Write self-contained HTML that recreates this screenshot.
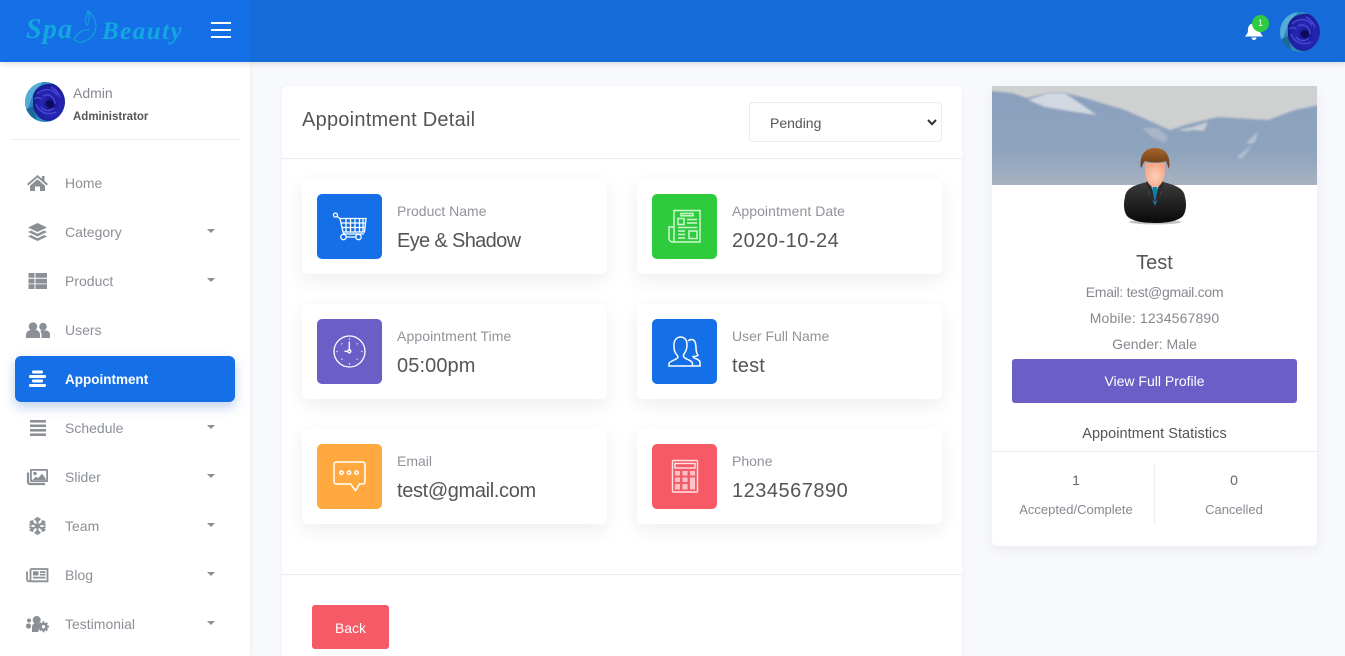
<!DOCTYPE html>
<html><head><meta charset="utf-8"><title>Appointment Detail</title>
<style>
*{box-sizing:border-box}
html,body{margin:0;padding:0;width:1345px;height:656px;overflow:hidden;background:#f8f9fd;font-family:"Liberation Sans",sans-serif;color:#555}
#wrap{position:relative;width:1345px;height:656px;overflow:hidden}
.a{position:absolute}
.t{position:absolute;white-space:nowrap;line-height:1}
#top{left:0;top:0;width:1345px;height:62px;background:#146bd9;box-shadow:0 2px 5px rgba(0,0,0,.13);z-index:5}
#logo{left:0;top:0;width:250px;height:62px;background:#1570e8}
#side{left:0;top:62px;width:250px;height:594px;background:#fff;box-shadow:0 0 6px rgba(60,80,120,.07)}
.m{position:absolute;left:65px;font-size:14px;color:#8b9097;line-height:1;white-space:nowrap;z-index:2}
.ic{position:absolute;left:25px;width:26px;height:22px;z-index:2}
.car{position:absolute;left:207px;width:0;height:0;border-left:4.5px solid transparent;border-right:4.5px solid transparent;border-top:4.5px solid #8b9097}
.card{position:absolute;width:305px;height:95px;background:#fff;border-radius:6px;box-shadow:0 6px 18px rgba(60,70,100,.09)}
.sq{position:absolute;left:15px;top:15px;width:65px;height:65px;border-radius:5px}
.sq svg{position:absolute;left:0;top:0}
.lb{position:absolute;left:95px;top:25px;font-size:14px;color:#909399;line-height:1;white-space:nowrap}
.v{position:absolute;left:95px;top:52px;font-size:20px;color:#555;line-height:1;white-space:nowrap}
</style></head><body><div id="wrap">

<svg width="0" height="0" style="position:absolute"><defs>
<radialGradient id="r1" cx="55%" cy="55%" r="60%"><stop offset="0" stop-color="#14148a"/><stop offset=".5" stop-color="#2626b4"/><stop offset="1" stop-color="#1a1a8e"/></radialGradient>
<clipPath id="c1"><circle cx="20" cy="20" r="20"/></clipPath>
<g id="rose"><g clip-path="url(#c1)"><rect width="40" height="40" fill="#2a88bc"/><path d="M0 0h18L8 12 4 24 0 30z" fill="#55acd8"/><path d="M0 28l8-4 4 16H0z" fill="#1c6a9c"/><path d="M8 14C10 4 20 1 30 2c8 3 11 10 10 20-2 10-8 16-16 17-8 0-14-6-16-14z" fill="url(#r1)"/><path d="M12 12c6-6 16-6 20 1M11 22c3 8 11 12 20 8M18 14c6-3 12 1 12 8M16 25c3 4 9 5 13 1M9 17c3-2 5-2 7 0M26 5c4 2 7 5 9 10" stroke="#4a4ad8" stroke-width="1.300" fill="none"/><path d="M21 20c2-3 7-2 8 1s-2 6-5 5-4-4-3-6z" fill="#0c0c58"/></g></g>
</defs></svg>

<div class="a" id="top">
  <div class="a" id="logo">
    <div class="t" style="left:26px;top:14px;font:italic bold 28px 'Liberation Serif',serif;color:#14a6de;letter-spacing:1.3px">Spa</div>
    <svg class="a" style="left:72px;top:8px" width="30" height="38" viewBox="0 0 30 38" fill="none" stroke="#12a0d6" stroke-width="1.200"><path d="M16 3C14 9 12 13 15 17C18 13 18 8 16 3ZM16 3C26 10 29 28 10 34C7 34.500 3 33 2 31C6 24 12 21 18 22"/></svg>
    <div class="t" style="left:102px;top:18px;font:italic bold 25px 'Liberation Serif',serif;color:#14a6de;letter-spacing:1.500px">Beauty</div>
    <div class="a" style="left:211px;top:22px;width:20px;height:2px;background:#fff"></div>
    <div class="a" style="left:211px;top:29px;width:20px;height:2px;background:#fff"></div>
    <div class="a" style="left:211px;top:36px;width:20px;height:2px;background:#fff"></div>
  </div>
  <svg class="a" style="left:1244px;top:22px" width="20" height="20" viewBox="0 0 20 20"><path fill="#fff" d="M10 0c1 0 1.500.7 1.500 1.500C14.500 2.200 16 4.500 16 7.500c0 3.500 1 4.500 3 7H1c2-2.500 3-3.500 3-7C4 4.500 5.500 2.200 8.500 1.500 8.500.7 9 0 10 0zM7.600 15.500h4.800c0 1.400-1 2.500-2.400 2.500s-2.400-1.100-2.400-2.500z"/></svg>
  <div class="a" style="left:1252px;top:15px;width:17px;height:17px;border-radius:50%;background:#2ecc40;color:#fff;font-size:9px;line-height:17px;text-align:center">1</div>
  <svg class="a" style="left:1280px;top:12px" width="40" height="40" viewBox="0 0 40 40"><use href="#rose"/></svg>
</div>

<div class="a" id="side"></div>
<svg class="a" style="left:25px;top:82px" width="40" height="40" viewBox="0 0 40 40"><use href="#rose"/></svg>
<div class="t" style="left:73px;top:86px;font-size:14px;color:#85898f">Admin</div>
<div class="t" style="left:73px;top:112px;font-size:11.500px;font-weight:bold;color:#555">Administrator</div>
<div class="a" style="left:10px;top:139px;width:230px;height:1px;background:#eceef1"></div>

<svg class="ic" style="top:172px" viewBox="0 0 26 22" fill="#8b9097"><path d="M12.500 3L2 12l1.200 1.500L12.500 5.500l9.300 8L23 12l-3.500-3V4H17v2.800z"/><path d="M5 13.700V19h5v-4.500h5V19h5v-5.300L12.500 7.200z"/></svg>
<div class="m" style="top:176px">Home</div>

<svg class="ic" style="top:221px" viewBox="0 0 26 22" fill="#8b9097"><path d="M12.500 2L22 6.500 12.500 11 3 6.500z"/><path d="M3 11l3-1.500 6.500 3.200L19 9.500l3 1.500-9.500 4.500z"/><path d="M3 15.500L6 14l6.500 3.200L19 14l3 1.500-9.500 4.500z"/></svg>
<div class="m" style="top:225px">Category</div>
<div class="car" style="top:229px"></div>

<svg class="ic" style="top:270px" viewBox="0 0 26 22" fill="#8b9097"><path d="M3.500 3h6v4.800h-6zM10.500 3H22v4.800H10.500zM3.500 8.700h6v4.800h-6zM10.500 8.700H22v4.800H10.500zM3.500 14.300h6V19h-6zM10.500 14.300H22V19H10.500z"/></svg>
<div class="m" style="top:274px">Product</div>
<div class="car" style="top:278px"></div>

<svg class="ic" style="top:319px" viewBox="0 0 26 22" fill="#8b9097"><circle cx="8" cy="7.500" r="4.300"/><circle cx="18" cy="7.700" r="3.800"/><path d="M1 19v-3c0-3 2.500-5 5-5h4.500c2.500 0 4.500 2 4.500 5v3z"/><path d="M16.500 19v-3c0-1.500-.4-3-1.300-4 .6-.5 1.300-.6 2-.6h3c2.500 0 4.800 1.600 4.800 4.100V19z"/></svg>
<div class="m" style="top:323px">Users</div>

<div class="a" style="left:15px;top:356px;width:220px;height:46px;background:#1570e8;border-radius:6px;box-shadow:0 5px 12px rgba(21,90,190,.28)"></div>
<svg class="ic" style="top:368px" viewBox="0 0 26 22" fill="#fff"><rect x="7" y="2.500" width="11" height="3" rx="1.200"/><rect x="4" y="7" width="17" height="3" rx="1.200"/><rect x="7" y="11.500" width="11" height="3" rx="1.200"/><rect x="4" y="16" width="17" height="3" rx="1.200"/></svg>
<div class="m" style="top:373px;color:#fff;font-weight:bold;font-size:13.500px">Appointment</div>

<svg class="ic" style="top:417px" viewBox="0 0 26 22" fill="#8b9097"><rect x="5" y="3" width="16" height="2.600"/><rect x="5" y="7.500" width="16" height="2.600"/><rect x="5" y="12" width="16" height="2.600"/><rect x="5" y="16.400" width="16" height="2.600"/></svg>
<div class="m" style="top:421px">Schedule</div>
<div class="car" style="top:425px"></div>

<svg class="ic" style="top:466px" viewBox="0 0 26 22"><path fill="#8b9097" d="M6 3h16c.6 0 1 .4 1 1v11c0 .6-.4 1-1 1H6c-.6 0-1-.4-1-1V4c0-.6.4-1 1-1z"/><path fill="#fff" d="M6.800 4.800h14.400v9.400H6.800z"/><circle cx="10" cy="7.500" r="1.700" fill="#8b9097"/><path fill="#8b9097" d="M7.500 14l3.500-3.500 2 1.800 4-4.500 3.500 4.500v1.700z"/><path fill="none" stroke="#8b9097" stroke-width="2.200" d="M3 6.500V16c0 1 .6 2 2 2h15"/></svg>
<div class="m" style="top:470px">Slider</div>
<div class="car" style="top:474px"></div>

<svg class="ic" style="top:515px" viewBox="0 0 26 22" fill="none" stroke="#8b9097" stroke-width="2"><path d="M12.500 2v18M4.700 6.500l15.600 9M20.300 6.500l-15.600 9M9.800 3.500l2.700 2.700 2.700-2.700M9.800 18.500l2.700-2.700 2.700 2.700M4.500 10l3.500-1.200-.9-3.600M20.500 10L17 8.800l.9-3.600M4.500 12l3.500 1.200-.9 3.600M20.500 12L17 13.200l.9 3.600"/></svg>
<div class="m" style="top:519px">Team</div>
<div class="car" style="top:523px"></div>

<svg class="ic" style="top:564px" viewBox="0 0 26 22"><path fill="none" stroke="#8b9097" stroke-width="1.800" d="M5.500 5H22.500V17.300H4c-1.100 0-2-.8-2-2V7.500M5.500 5V17.300"/><path fill="#8b9097" d="M8 7.300h5.500v4.200H8zM15 7.300h5.500v1.700H15zM15 9.900h5.500v1.600H15zM8 12.800h12.500v1.700H8z"/></svg>
<div class="m" style="top:568px">Blog</div>
<div class="car" style="top:572px"></div>

<svg class="ic" style="top:613px" viewBox="0 0 26 22" fill="#8b9097"><circle cx="11.700" cy="7" r="4"/><circle cx="4" cy="7.500" r="2"/><circle cx="3.500" cy="13" r="2.600"/><path d="M7 19v-5c0-2.500 2-4 5-4 2 0 3 .5 4 1.500L13 19z"/><circle cx="18.500" cy="13.700" r="3" fill="none" stroke="#8b9097" stroke-width="2.600"/><path d="M18.500 8.200v2M18.500 17.200v2M13 13.700h2M22 13.700h2M14.700 9.900l1.400 1.400M20.900 16.100l1.400 1.400M22.300 9.900l-1.400 1.400M16.100 16.100l-1.400 1.400" stroke="#8b9097" stroke-width="1.900"/></svg>
<div class="m" style="top:617px">Testimonial</div>
<div class="car" style="top:621px"></div>

<!-- main panel -->
<div class="a" style="left:282px;top:86px;width:680px;height:570px;background:#fff;border-radius:6px 6px 0 0;box-shadow:0 2px 8px rgba(60,70,100,.04)"></div>
<div class="t" style="left:302px;top:110px;font-size:20px;color:#555;letter-spacing:.24px">Appointment Detail</div>
<div class="a" style="left:749px;top:102px;width:193px;height:40px;background:#fff;border:1px solid #e9ecef;border-radius:4px"></div>
<div class="t" style="left:770px;top:116px;font-size:14px;color:#555">Pending</div>
<svg class="a" style="left:926px;top:118px" width="12" height="9" viewBox="0 0 12 9"><path d="M2 2l4 4.200L10 2" fill="none" stroke="#333" stroke-width="2"/></svg>
<div class="a" style="left:282px;top:158px;width:680px;height:1px;background:#e9ecef"></div>

<div class="card" style="left:302px;top:179px">
  <div class="sq" style="background:#1570e8"><svg width="65" height="65" viewBox="0 0 65 65" fill="none" stroke="#fff" stroke-width="1.300"><circle cx="18.500" cy="21" r="2"/><path d="M20 22.500L23 24.500l3 13.500c.3 1.200 1 2 2.300 2H47"/><path d="M23.500 24.500H49l-1.500 13.500H26.300M24.300 29h24.200M25.200 33.500h22.800M29 24.500V38M33.500 24.500V38M38 24.500V38M42.500 24.500V38M46 24.500V38"/><circle cx="26.500" cy="43" r="2.700"/><circle cx="41.500" cy="43" r="2.700"/><path d="M29.200 43h9.600"/></svg></div>
  <div class="lb">Product Name</div><div class="v" style="letter-spacing:-.65px">Eye &amp; Shadow</div>
</div>
<div class="card" style="left:637px;top:179px">
  <div class="sq" style="background:#2ecc3c"><svg width="65" height="65" viewBox="0 0 65 65" fill="none" stroke="#cff7cf" stroke-width="1.500"><path d="M22 33V16.500h26V48H21c-2.500 0-4-1.500-4-4V33h5v12c0 1.500-.5 3-1.500 3"/><path d="M29 19.500h12v2.300H29zM26 24.500h6v6h-6zM35 25.500h10M35 29h10M26 33.500h19M26 37h7M26 40.500h7M26 44h7M37 37h8v7.500h-8z"/></svg></div>
  <div class="lb" style="letter-spacing:.06px">Appointment Date</div><div class="v" style="letter-spacing:.5px">2020-10-24</div>
</div>
<div class="card" style="left:302px;top:304px">
  <div class="sq" style="background:#6b5fc7"><svg width="65" height="65" viewBox="0 0 65 65" fill="none" stroke="#fff" stroke-width="1.300"><circle cx="32.500" cy="32.500" r="15.500"/><path d="M32.300 22.500v9.500M27.500 32.300h3.500"/><circle cx="32.300" cy="32.300" r="1.500"/><path d="M32.500 19.500v1.200M32.500 44.300v1.200M19.500 32.500h1.200M44.300 32.500h1.200M24.500 24.500l.7.7M39.800 39.800l.7.7M40.500 24.500l-.7.7M25.200 39.800l-.7.7"/></svg></div>
  <div class="lb" style="letter-spacing:.1px">Appointment Time</div><div class="v" style="letter-spacing:.1px">05:00pm</div>
</div>
<div class="card" style="left:637px;top:304px">
  <div class="sq" style="background:#1570e8"><svg width="65" height="65" viewBox="0 0 65 65" fill="none" stroke="#fff" stroke-width="1.500"><path d="M17 47v-2.500c0-2.500 9-4 9-6.500 0-1.500-3-3.500-3.500-6.500-.5-1.500-1-7 0-9 1-3 3.500-4.500 6-4.500 4 0 6.500 3 6.500 7.500 0 2.500-.5 5-1.500 7-1 2-2.500 3-2 5 .5 2.500 9 3.500 9 7V47z"/><path d="M36 22c2-2 5-2 6.500 0 2 2.500 1 7 2 11 .5 2 1.500 3.500 1.500 3.500s-2 1-5 1c0 2 7 2.500 7 6v3.500h-7"/></svg></div>
  <div class="lb">User Full Name</div><div class="v" style="letter-spacing:.2px">test</div>
</div>
<div class="card" style="left:302px;top:429px">
  <div class="sq" style="background:#ffa940"><svg width="65" height="65" viewBox="0 0 65 65" fill="none" stroke="#fff" stroke-width="1.500"><path d="M19.500 18h26c1.500 0 2.500 1 2.500 2.500v17c0 1.500-1 2.500-2.500 2.500h-3l-4 6.500-5-6.500h-14c-1.500 0-2.500-1-2.500-2.500v-17c0-1.500 1-2.500 2.500-2.500z"/><circle cx="24.500" cy="28.700" r="1.700"/><circle cx="32" cy="28.700" r="1.700"/><circle cx="39.500" cy="28.700" r="1.700"/></svg></div>
  <div class="lb">Email</div><div class="v" style="letter-spacing:-.35px">test@gmail.com</div>
</div>
<div class="card" style="left:637px;top:429px">
  <div class="sq" style="background:#f55a66"><svg width="65" height="65" viewBox="0 0 65 65" fill="none" stroke="#fde3e5" stroke-width="1.400"><rect x="20.500" y="16.500" width="25" height="31.500" rx="1"/><rect x="23" y="19.500" width="20" height="4.500"/><path fill="#fbc4c8" stroke="none" d="M23 27h5v4.500h-5zM30.500 27h5v4.500h-5zM38 27h5v4.500h-5zM23 33.500h5v4.500h-5zM30.500 33.500h5v4.500h-5zM38 33.500h5V45.500h-5zM23 40h5v5.500h-5zM30.500 40h5v5.500h-5z"/></svg></div>
  <div class="lb">Phone</div><div class="v" style="letter-spacing:.5px">1234567890</div>
</div>

<div class="a" style="left:282px;top:574px;width:680px;height:1px;background:#e9ecef"></div>
<div class="a" style="left:312px;top:605px;width:77px;height:44px;background:#f55a66;border-radius:3px;color:#fff;font-size:14px;line-height:46px;text-align:center">Back</div>

<!-- profile card -->
<div class="a" style="left:992px;top:86px;width:325px;height:460px;background:#fff;border-radius:6px;box-shadow:0 3px 12px rgba(60,70,100,.08)"></div>
<svg class="a" style="left:992px;top:86px" width="325" height="99" viewBox="0 0 325 99">
  <defs><linearGradient id="mt" x1="0" y1="0" x2="0" y2="1"><stop offset="0" stop-color="#8aa0bd"/><stop offset=".65" stop-color="#8fa4be"/><stop offset="1" stop-color="#a9b3c1"/></linearGradient><filter id="bl"><feGaussianBlur stdDeviation="1"/></filter></defs>
  <rect width="325" height="99" fill="#cfd0d0"/>
  <path filter="url(#bl)" d="M-2 5L20 7 35 12 56 7 73 7 93 12 133 24 160 36 178 44 193 39 226 31 276 34 303 24 327 19V101H-2z" fill="url(#mt)"/>
  <g filter="url(#bl)">
  <path d="M36 14L56 7 73 7 105 29 83 26 53 21z" fill="#d2d8e1"/>
  <path d="M150 42l16 0 10 9-3 6-13-6z" fill="#aab6c8"/>
  <path d="M245 71l15-12-7 10-4 4zM255 56l11-10-3 10-6 2z" fill="#b9c3d1"/>
  <path d="M186 44l14-3 16-5-4 9-10-1-8 1z" fill="#c8ced8"/>
  </g>
</svg>
<svg class="a" style="left:1120px;top:145px" width="70" height="82" viewBox="0 0 70 82">
  <defs><radialGradient id="sk" cx="50%" cy="55%" r="55%"><stop offset="0" stop-color="#fdd2b8"/><stop offset="1" stop-color="#f6a688"/></radialGradient><linearGradient id="su" x1="0" y1="0" x2="0" y2="1"><stop offset="0" stop-color="#3c3c3c"/><stop offset="1" stop-color="#090909"/></linearGradient><linearGradient id="hr" x1="0" y1="0" x2="0" y2="1"><stop offset="0" stop-color="#a8652c"/><stop offset="1" stop-color="#5e3311"/></linearGradient></defs>
  <ellipse cx="35" cy="77" rx="26" ry="2.500" fill="#888" opacity=".5"/>
  <path d="M27 37C15 40 6 43 5 52c-2 8-1 16 3 20 7 5 17 6 27 6s20-1 27-6c4-4 5-12 3-20-1-9-10-12-22-15z" fill="url(#su)"/>
  <path d="M27 36h16l-2 12-6 12-6-12z" fill="#cfe4f0"/>
  <path d="M32.500 42h5l1 10-3.500 9-3.500-9z" fill="#0f7fa8"/>
  <path d="M26 37l4-2 5 22-4-3zM44 37l-4-2-5 22 4-3z" fill="#2c2c2c"/>
  <path d="M25 18c-1 12 2 24 10 24s11-12 10-24z" fill="url(#sk)"/>
  <path d="M21 24C19 11 24 3 35 3s16 8 14 21c-1-3-2-6-3-8-6 2-15 2-21 0-2 2-3 5-4 8z" fill="url(#hr)"/>
</svg>
<div class="t" style="left:992px;width:325px;text-align:center;top:253px;font-size:20px;color:#555">Test</div>
<div class="t" style="left:992px;width:325px;text-align:center;top:285px;font-size:14px;color:#85898f;letter-spacing:-.28px">Email: test@gmail.com</div>
<div class="t" style="left:992px;width:325px;text-align:center;top:311px;font-size:14px;color:#85898f;letter-spacing:.15px">Mobile: 1234567890</div>
<div class="t" style="left:992px;width:325px;text-align:center;top:337px;font-size:14px;color:#85898f">Gender: Male</div>
<div class="a" style="left:1012px;top:359px;width:285px;height:44px;background:#6b5fc7;border-radius:3px;color:#fff;font-size:14px;line-height:44px;text-align:center">View Full Profile</div>
<div class="t" style="left:992px;width:325px;text-align:center;top:427px;font-size:14.500px;color:#555;letter-spacing:.05px">Appointment Statistics</div>
<div class="a" style="left:992px;top:451px;width:325px;height:1px;background:#e9ecef"></div>
<div class="a" style="left:1154px;top:464px;width:1px;height:60px;background:#eceef1"></div>
<div class="t" style="left:992px;width:168px;text-align:center;top:473px;font-size:14px;color:#666">1</div>
<div class="t" style="left:1155px;width:158px;text-align:center;top:473px;font-size:14px;color:#666">0</div>
<div class="t" style="left:992px;width:168px;text-align:center;top:503px;font-size:13px;color:#85898f">Accepted/Complete</div>
<div class="t" style="left:1155px;width:158px;text-align:center;top:503px;font-size:13px;color:#85898f">Cancelled</div>
</div></body></html>
